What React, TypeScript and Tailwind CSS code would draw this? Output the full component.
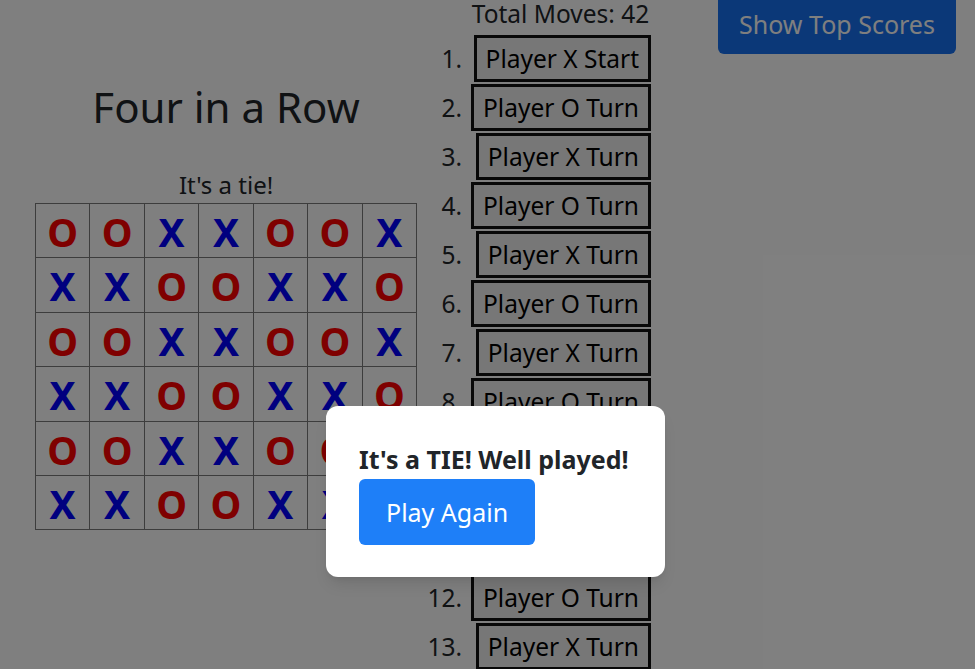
import React from "react";

const board = [
  "OOXXOOX",
  "XXOOXXO",
  "OOXXOOX",
  "XXOOXXO",
  "OOXXOOX",
  "XXOOXXO",
];

const moves = Array.from({ length: 42 }, (_, i) =>
  i === 0 ? "Player X Start" : i % 2 === 1 ? "Player O Turn" : "Player X Turn"
);

function Cell({ mark }: { mark: string }) {
  return (
    <div className="flex h-[54.4px] w-[54.45px] items-center justify-center border-b border-r border-[#7a7a7a] pt-[3px]">
      <span
        className={
          mark === "X"
            ? "text-[39px] font-bold text-[#0000ff]"
            : "text-[39px] font-bold text-[#ff0000]"
        }
      >
        {mark}
      </span>
    </div>
  );
}

export default function App() {
  return (
    <div className="relative h-[669px] overflow-hidden bg-white font-['Noto_Sans',sans-serif] text-[#212529]">
      <div className="flex">
        {/* game column */}
        <div className="flex w-[420px] shrink-0 flex-col items-center pl-[32px]">
          <h1 className="mt-[82px] text-[42px] font-normal leading-[50px]">Four in a Row</h1>
          <p className="mt-[38px] text-[24px] leading-[30px]">It's a tie!</p>
          <div className="mt-[3px] grid grid-cols-7 border-l border-t border-[#7a7a7a]">
            {board.map((row, r) =>
              row.split("").map((mark, c) => <Cell key={`${r}-${c}`} mark={mark} />)
            )}
          </div>
        </div>

        {/* move history */}
        <div className="w-[231px] shrink-0">
          <div className="flex">
            <div className="w-[50px]" />
            <div className="w-[181px] whitespace-nowrap text-center text-[24.5px] leading-[27px]">
              Total Moves: 42
            </div>
          </div>
          <ol className="mt-[8px] flex flex-col gap-[2px]">
            {moves.map((label, i) => (
              <li key={i} className="flex items-center text-[24.5px]">
                <span className="w-[42px] text-right leading-[34px]">{i + 1}.</span>
                <div className="ml-[8px] flex w-[181px] justify-end">
                  <button className="h-[47px] whitespace-nowrap border-[3px] border-[#111] bg-[#efefef] px-[9px] leading-[34px] text-black">
                    {label}
                  </button>
                </div>
              </li>
            ))}
          </ol>
        </div>

        <div className="ml-[67px]">
          <button className="-mt-[6px] w-[238px] rounded-[6px] bg-[#1671f0] py-[11px] text-center text-[25px] leading-[38px] text-white">
            Show Top Scores
          </button>
        </div>
      </div>

      {/* modal */}
      <div className="absolute inset-0 bg-black/50" />
      <div className="absolute left-[326px] top-[406px] w-[339px] rounded-[12px] bg-white px-[33px] pb-[32px] pt-[39px] shadow-lg">
        <h2 className="whitespace-nowrap text-[25px] font-bold leading-[29px]">It's a TIE! Well played!</h2>
        <button className="mt-[5px] rounded-[6px] bg-[#1e7ff8] px-[27px] py-[16px] text-[25px] leading-[34px] text-white">
          Play Again
        </button>
      </div>
    </div>
  );
}
